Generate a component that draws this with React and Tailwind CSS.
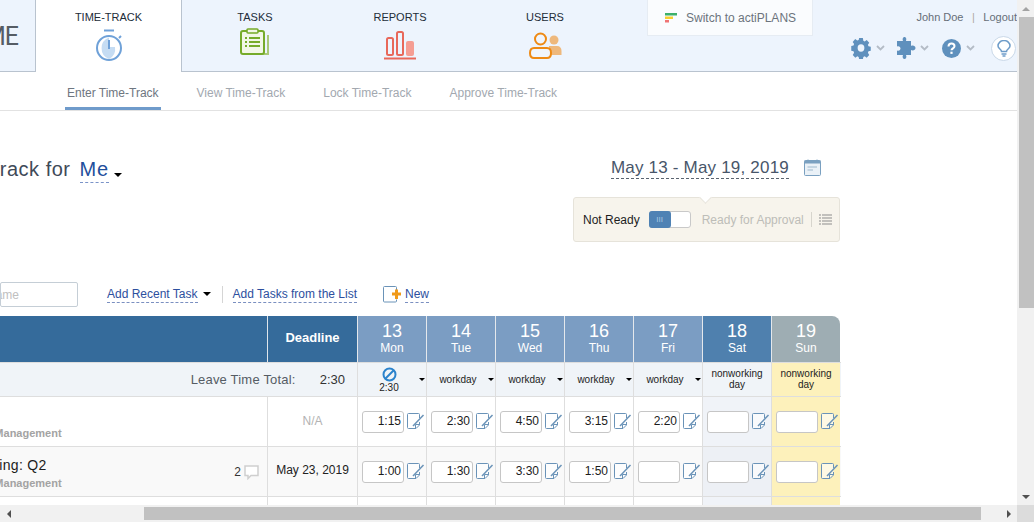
import React from 'react';

const days = [
  { n: '13', d: 'Mon', bg: 'bg-[#7b9dc3]' },
  { n: '14', d: 'Tue', bg: 'bg-[#7b9dc3]' },
  { n: '15', d: 'Wed', bg: 'bg-[#7b9dc3]' },
  { n: '16', d: 'Thu', bg: 'bg-[#7b9dc3]' },
  { n: '17', d: 'Fri', bg: 'bg-[#7b9dc3]' },
  { n: '18', d: 'Sat', bg: 'bg-[#4f80ae]' },
  { n: '19', d: 'Sun', bg: 'bg-[#9eadb3] rounded-tr-[8px]' },
];

const row1 = ['1:15', '2:30', '4:50', '3:15', '2:20', '', ''];
const row2 = ['1:00', '1:30', '3:30', '1:50', '', '', ''];

const Caret = ({ className = '' }) => (
  <span className={`inline-block w-0 h-0 border-x-[4px] border-x-transparent border-t-[4px] border-t-black ${className}`} />
);

const NoteIcon = () => (
  <svg width="18" height="17" viewBox="0 0 18 17" fill="none" className="shrink-0">
    <path d="M1.500 0.500H11.500L12.500 1.500V12L9 15.500H1.500L0.500 14.500V1.500Z" fill="#fff" fillOpacity="0.6" />
    <path d="M12.500 5V1.500A1 1 0 0 0 11.500 0.500H1.500A1 1 0 0 0 0.500 1.500V14.500A1 1 0 0 0 1.500 15.500H9L12.500 12V9" stroke="#6a93b8" strokeWidth="1" />
    <path d="M8.500 15.500V11.500H12.500" stroke="#6a93b8" strokeWidth="1" />
    <path d="M6 13L16.500 2" stroke="#6a93b8" strokeWidth="1.500" />
  </svg>
);

const Chevron = ({ className = '' }) => (
  <svg width="9" height="6" viewBox="0 0 9 6" fill="none" className={className}>
    <path d="M1 1L4.500 4.500L8 1" stroke="#b4bcc6" strokeWidth="1.800" />
  </svg>
);

const TimerIcon = () => (
  <svg width="28" height="34" viewBox="0 0 28 34" fill="none">
    <path d="M9 2.500H19" stroke="#6fa1d8" strokeWidth="2" />
    <path d="M14 9.500A11.500 11.500 0 0 0 14 31A11.500 11.500 0 0 0 20 19H14Z" fill="#c5dcf3" />
    <circle cx="14" cy="20" r="12" stroke="#6fa1d8" strokeWidth="2" />
    <path d="M14 12V21" stroke="#6fa1d8" strokeWidth="2" />
    <path d="M24 10L26 8" stroke="#6fa1d8" strokeWidth="2" />
  </svg>
);

const TasksIcon = () => (
  <svg width="31" height="31" viewBox="0 0 31 31" fill="none">
    <path d="M6 27H29V7H27V25H6Z" fill="#a9c877" />
    <rect x="1" y="3" width="23" height="23" rx="2" fill="#f2f7e7" stroke="#76ab2a" strokeWidth="2" />
    <rect x="7" y="1" width="11" height="4" rx="1" fill="#f2f7e7" stroke="#76ab2a" strokeWidth="1.600" />
    <path d="M5 10H7M9 10H20M5 14H7M9 14H20M5 18H7M9 18H20" stroke="#76ab2a" strokeWidth="2" />
  </svg>
);

const ReportsIcon = () => (
  <svg width="32" height="30" viewBox="0 0 32 30" fill="none">
    <rect x="3" y="7" width="6" height="17" rx="1.500" stroke="#e8685a" strokeWidth="2" />
    <rect x="13" y="1" width="6" height="23" rx="1.500" stroke="#e8685a" strokeWidth="2" />
    <rect x="22" y="10" width="8" height="15" rx="2" fill="#f59d93" />
    <path d="M0 27.500H32" stroke="#e8685a" strokeWidth="2" />
  </svg>
);

const UsersIcon = () => (
  <svg width="33" height="27" viewBox="0 0 33 27" fill="none">
    <circle cx="25" cy="8" r="4.500" fill="#eeb87c" />
    <path d="M20 14H28C31 14 32.500 16 32.500 19V23H20Z" fill="#eeb87c" />
    <circle cx="11.500" cy="7" r="5.500" fill="#f0f5fc" stroke="#ee8a14" strokeWidth="2" />
    <path d="M5 16H18C21 16 22 18 22 21C22 24 21 26 18 26H5C2 26 1 24 1 21C1 18 2 16 5 16Z" fill="#f0f5fc" stroke="#ee8a14" strokeWidth="2" />
  </svg>
);

const GearIcon = () => (
  <svg width="20" height="22" viewBox="0 0 24 24" preserveAspectRatio="none">
    <path
      fillRule="evenodd"
      fill="#5f90bd"
      d="M9.500 0h5l.6 3.200 1.800.8 2.700-1.800 3.400 3.400-1.800 2.600.8 1.800 3 .6v4.800l-3 .6-.8 1.800 1.800 2.600-3.400 3.400-2.700-1.800-1.800.8-.6 3.200h-5l-.6-3.200-1.800-.8-2.700 1.800-3.400-3.400 1.800-2.600-.8-1.800-3-.6V9.600l3-.6.8-1.800L.9 4.600l3.400-3.400L7 3l1.900-.8zM12 7.500a4.500 4.500 0 1 0 0 9 4.500 4.500 0 0 0 0-9z"
      transform="translate(1.200 1.200) scale(.9)"
    />
  </svg>
);

const PuzzleIcon = () => (
  <svg width="20" height="22" viewBox="0 0 20 22">
    <path
      fill="#5f90bd"
      d="M1 4H7C6 1 7.500 0 8.500 0S11 1 10 4H15V9C17 8 19.500 9 19.500 11S17 14 15 13V18H10C11 20 10 22 8.500 22S6 20 7 18H1V13.500C3 14.500 4.500 13 4.500 11.500S3 8.500 1 9.500Z"
    />
  </svg>
);

const BulbIcon = () => (
  <svg width="14" height="17" viewBox="0 0 14 17" fill="none">
    <path d="M4.500 11.500C4.500 9.500 1 8.500 1 6A6 5.500 0 0 1 13 6C13 8.500 9.500 9.500 9.500 11.500Z" stroke="#6d9cc9" strokeWidth="1.500" />
    <path d="M4.500 14H9.500M5.500 16H8.500" stroke="#6d9cc9" strokeWidth="1.500" />
  </svg>
);

const NavTab = ({ label, icon, w, gap = 'mt-[5px]' }) => (
  <div className={`${w} flex flex-col items-center pt-[11px] text-[11px] leading-[13px] text-[#222c38]`}>
    <span>{label}</span>
    <div className={gap}>{icon}</div>
  </div>
);

const SubTab = ({ label, active, className = '' }) => (
  <div className={`h-full px-[2px] pt-[14px] text-[12px] leading-[15px] ${active ? 'text-[#6e7680] border-b-[3px] border-[#6f9bcb]' : 'text-[#a2a8af]'} ${className}`}>
    {label}
  </div>
);

const TimeInput = ({ value }) => (
  <div className="w-[42px] h-[22px] bg-white border border-[#c6c6c6] rounded-[3px] text-right pr-[2px] text-[12px] leading-[19px] text-[#1c1c1c]">
    {value}
  </div>
);

const dayCell = (i, alt) => {
  if (i === 5) return alt ? 'bg-[#edf0f5]' : 'bg-[#f0f3f8]';
  if (i === 6) return 'bg-[#fdf1bb]';
  return alt ? 'bg-[#f9f9f9]' : 'bg-white';
};

const DayCells = ({ values, alt }) =>
  values.map((v, i) => (
    <div key={i} className={`w-[69px] shrink-0 border-l border-[#dedede] flex items-center pl-[4px] gap-[3px] ${dayCell(i, alt)}`}>
      <TimeInput value={v} />
      <NoteIcon />
    </div>
  ));

export default function App() {
  return (
    <div className="w-[1034px] h-[522px] overflow-hidden flex flex-col bg-white font-['Liberation_Sans',Arial,sans-serif]">
      <div className="flex h-[505px]">
        <div className="w-[1017px] h-[505px] overflow-hidden">
          {/* top bar */}
          <div className="h-[72px] flex bg-[#edf4fd] border-b border-[#b9c3cf] relative">
            <div className="w-[36px] h-[71px] border-r border-[#b9c3cf] overflow-hidden flex justify-end items-center pr-[17px]">
              <span className="text-[25px] leading-none tracking-[-1px] text-[#555c64] font-['Roboto',sans-serif] pt-[2px] shrink-0">ME</span>
            </div>
            <div className="w-[146px] h-[72px] bg-white border-r border-[#b9c3cf] flex flex-col items-center pt-[11px] text-[11px] leading-[13px] text-[#222c38] shrink-0">
              <span>TIME-TRACK</span>
              <div className="mt-[4px]"><TimerIcon /></div>
            </div>
            <div className="flex">
              <NavTab label="TASKS" w="w-[146px]" gap="mt-[4px]" icon={<TasksIcon />} />
              <NavTab label="REPORTS" w="w-[144px]" gap="mt-[7px]" icon={<ReportsIcon />} />
              <NavTab label="USERS" w="w-[146px]" gap="mt-[8px]" icon={<UsersIcon />} />
            </div>
            <div className="absolute left-[647px] top-0 w-[166px] h-[36px] bg-[#fafcfe] border-r border-b border-l border-[#e6ecf3] flex items-center pl-[17px] gap-[8px]">
              <svg width="13" height="10" viewBox="0 0 13 10">
                <rect x="0" y="0" width="12" height="2.500" fill="#3db06b" />
                <rect x="0" y="3.500" width="8" height="2.500" fill="#f7cf2e" />
                <rect x="0" y="7" width="4" height="2.500" fill="#ef7474" />
              </svg>
              <span className="text-[12px] text-[#6c747d]">Switch to actiPLANS</span>
            </div>
            <div className="absolute right-0 top-0 w-[190px] h-[71px]">
              <div className="flex justify-end items-center h-[14px] mt-[10px] text-[11px] text-[#666e78]">
                <span>John Doe</span>
                <span className="mx-[8.500px] text-[#b0a9a0]">|</span>
                <span>Logout</span>
              </div>
              <div className="flex items-center mt-[10px] pl-[24px] overflow-hidden h-[28px]">
                <GearIcon />
                <Chevron className="ml-[5px]" />
                <div className="ml-[11px]"><PuzzleIcon /></div>
                <Chevron className="ml-[4px]" />
                <svg width="19" height="19" viewBox="0 0 19 19" className="ml-[13px]">
                  <circle cx="9.500" cy="9.500" r="9.500" fill="#5f90bd" />
                  <path d="M6.500 7.500C6.500 5.800 7.800 4.500 9.500 4.500S12.500 5.600 12.500 7.200C12.500 9.300 9.500 9.300 9.500 11.300" stroke="#fff" strokeWidth="2" fill="none" />
                  <rect x="8.400" y="12.700" width="2.200" height="2.200" fill="#fff" />
                </svg>
                <Chevron className="ml-[5px]" />
                <div className="ml-[16px] w-[25px] h-[25px] shrink-0 rounded-full border border-[#c9d8e8] bg-white flex items-center justify-center">
                  <BulbIcon />
                </div>
              </div>
            </div>
          </div>

          {/* sub tabs */}
          <div className="h-[39px] flex border-b border-[#e2e2e2] pl-[65px]">
            <SubTab label="Enter Time-Track" active />
            <SubTab label="View Time-Track" className="ml-[34px]" />
            <SubTab label="Lock Time-Track" className="ml-[34px]" />
            <SubTab label="Approve Time-Track" className="ml-[34px]" />
          </div>

          {/* title + date */}
          <div className="w-[840px] flex justify-between h-[171px]">
            <div className="flex items-start pt-[46px] ml-[-65px] shrink-0">
              <span className="text-[20px] leading-[24px] tracking-[0.5px] text-[#3f4a58]">Time-Track for</span>
              <span className="ml-[9px] text-[20px] leading-[24px] text-[#1f4f9c] border-b border-dashed border-[#7a93c8] h-[26px] tracking-[0.8px]">Me</span>
              <Caret className="ml-[5px] mt-[16px]" />
            </div>
            <div className="flex flex-col items-end pt-[46px]">
              <div className="flex items-start pr-[19px]">
                <span className="text-[17px] leading-[21px] tracking-[0.2px] text-[#48566a] border-b border-dashed border-[#5a6470] h-[22px]">May 13 - May 19, 2019</span>
                <svg width="17" height="17" viewBox="0 0 17 17" fill="none" className="ml-[15px] mt-[2px]">
                  <rect x="0.500" y="1.500" width="16" height="15" rx="1" fill="#eaf1f7" stroke="#7aa0c0" />
                  <rect x="0.500" y="1.500" width="16" height="3" fill="#7aa0c0" />
                  <path d="M4 0.500V3M13 0.500V3" stroke="#7aa0c0" />
                  <path d="M3.500 8H13M3.500 11H9" stroke="#b8cbdc" strokeWidth="1.500" />
                </svg>
              </div>
              <div className="relative w-[267px] h-[45px] mt-[18px] bg-[#f7f4ec] border border-[#e6e3da] rounded-[3px] flex items-center pl-[9px]">
                <div className="absolute left-[127px] top-[-5px] w-[9px] h-[9px] rotate-45 bg-white border-r border-b border-[#e6e3da]" />
                <span className="text-[12px] text-[#1d1d1d]">Not Ready</span>
                <div className="ml-[9px] w-[42px] h-[17px] rounded-[3px] bg-white border border-[#c9c9c9] flex">
                  <div className="w-[22px] h-[17px] mt-[-1px] ml-[-1px] rounded-[3px] bg-[#4f82b4] flex items-center justify-center text-[#a9c7e2] text-[8px] leading-none">III</div>
                </div>
                <span className="ml-[11px] text-[12px] text-[#bdbdb8]">Ready for Approval</span>
                <div className="ml-[7px] w-px h-[15px] bg-[#d7d5cd]" />
                <svg width="13" height="11" viewBox="0 0 13 11" className="ml-[7px]">
                  <path d="M0 1H2M3 1H13M0 4H2M3 4H13M0 7H2M3 7H13M0 10H2M3 10H13" stroke="#8d8d8d" strokeWidth="1" />
                </svg>
              </div>
            </div>
          </div>

          {/* toolbar */}
          <div className="h-[34px] flex items-start">
            <div className="w-[78px] h-[25px] border border-[#c5ced6] rounded-[2px] flex justify-end items-center pr-[58px] text-[12px] text-[#c0c0c0] overflow-hidden shrink-0">
              <span className="shrink-0">Name</span>
            </div>
            <div className="ml-[29px] mt-[5px] text-[12px] leading-[15px] text-[#2d4f9e] border-b border-dashed border-[#7a8fc0] h-[16px]">Add Recent Task</div>
            <Caret className="ml-[5px] mt-[10px]" />
            <div className="ml-[11px] mt-[4px] w-px h-[17px] bg-[#d5d5d5]" />
            <div className="ml-[10px] mt-[5px] text-[12px] leading-[15px] text-[#2d4f9e] border-b border-dashed border-[#7a8fc0] h-[16px]">Add Tasks from the List</div>
            <svg width="18" height="17" viewBox="0 0 18 17" fill="none" className="ml-[26px] mt-[4px]">
              <path d="M13.500 4V1.500A1 1 0 0 0 12.500 0.500H1.500A1 1 0 0 0 0.500 1.500V15A1 1 0 0 0 1.500 16H12.500A1 1 0 0 0 13.500 15V13.500" stroke="#6a93b8" />
              <path d="M9 6.500H12V3.500H15V6.500H18V9.500H15V13H12V9.500H9Z" fill="#f09a1a" />
            </svg>
            <div className="ml-[4px] mt-[5px] text-[12px] leading-[15px] text-[#2d4f9e] border-b border-dashed border-[#7a8fc0] h-[16px]">New</div>
          </div>

          {/* grid */}
          <div className="w-[841px]">
            <div className="flex h-[46px] text-white">
              <div className="w-[267px] shrink-0 bg-[#356b9b]" />
              <div className="w-[90px] shrink-0 bg-[#356b9b] border-l border-[#dfe6ec] flex items-center justify-center text-[13px] font-bold pb-[2px]">Deadline</div>
              {days.map((d) => (
                <div key={d.n} className={`w-[69px] shrink-0 border-l border-[#e4e8ec] flex flex-col items-center pt-[6px] ${d.bg}`}>
                  <span className="text-[18px] leading-[19px]">{d.n}</span>
                  <span className="text-[12px] leading-[13px] pt-[1px]">{d.d}</span>
                </div>
              ))}
            </div>
            <div className="flex h-[35px] border-y border-[#dedede] bg-[#f0f4f8] text-[10px] text-[#222]">
              <div className="w-[357px] shrink-0 flex items-center justify-end pr-[12px] text-[13px] text-[#555c64]">
                <span className="tracking-[0.2px]">Leave Time Total:</span>
                <span className="ml-[24px] text-[#333]">2:30</span>
              </div>
              {['', 'workday', 'workday', 'workday', 'workday'].map((t, i) => (
                <div key={i} className="relative w-[69px] shrink-0 border-l border-[#dedede] flex items-center justify-center pr-[6px]">
                  {i === 0 ? (
                    <div className="flex flex-col items-center">
                      <svg width="15" height="15" viewBox="0 0 15 15" fill="none">
                        <circle cx="7.500" cy="7.500" r="6" stroke="#2b83cc" strokeWidth="2" />
                        <path d="M3.500 11.500L11.500 3.500" stroke="#2b83cc" strokeWidth="2" />
                      </svg>
                      <span className="leading-[11px]">2:30</span>
                    </div>
                  ) : (
                    <span>{t}</span>
                  )}
                  <Caret className="absolute right-[1px] top-[15px] border-x-[3px]! border-t-[3px]!" />
                </div>
              ))}
              <div className="w-[69px] shrink-0 border-l border-[#dedede] flex items-center justify-center text-center leading-[11px] pb-[2px]">nonworking<br />day</div>
              <div className="w-[69px] shrink-0 border-l border-[#dedede] bg-[#fdf1bb] flex items-center justify-center text-center leading-[11px] pb-[2px]">nonworking<br />day</div>
            </div>

            <div className="flex h-[50px] border-b border-[#dedede]">
              <div className="w-[267px] shrink-0 relative overflow-hidden">
                <span className="absolute left-[-46px] top-[28px] text-[11px] font-bold text-[#a3a3a3] whitespace-nowrap">Project Management</span>
              </div>
              <div className="w-[90px] shrink-0 border-l border-[#dedede] flex items-center justify-center text-[12px] text-[#b3b3b3] pb-[1px]">N/A</div>
              <DayCells values={row1} />
            </div>

            <div className="flex h-[50px] border-b border-[#dedede] bg-[#f9f9f9]">
              <div className="w-[267px] shrink-0 relative overflow-hidden">
                <span className="absolute left-[-38px] top-[10px] text-[14px] leading-[16px] tracking-[0.3px] text-[#1c1c1c] whitespace-nowrap">Planning: Q2</span>
                <span className="absolute left-[-46px] top-[28px] text-[11px] font-bold text-[#a3a3a3] whitespace-nowrap">Project Management</span>
                <div className="absolute right-[8px] top-[16px] flex items-center gap-[3px] text-[12px] text-[#333]">
                  <span>2</span>
                  <svg width="15" height="15" viewBox="0 0 15 15" fill="none">
                    <path d="M1 1H14V10.500H7L4 13.500V10.500H1Z" stroke="#cfcfcf" strokeWidth="1.500" fill="#fff" />
                  </svg>
                </div>
              </div>
              <div className="w-[90px] shrink-0 border-l border-[#dedede] flex items-center justify-center text-[12px] text-[#222] pb-[3px]">May 23, 2019</div>
              <DayCells values={row2} alt />
            </div>

            <div className="flex h-[20px]">
              <div className="w-[267px] shrink-0" />
              <div className="w-[90px] shrink-0 border-l border-[#dedede]" />
              {row2.map((_, i) => (
                <div key={i} className={`w-[69px] shrink-0 border-l border-[#dedede] ${dayCell(i, false)}`} />
              ))}
            </div>
          </div>
        </div>

        {/* vertical scrollbar */}
        <div className="w-[17px] h-[505px] bg-[#f1f1f1] flex flex-col items-center">
          <div className="h-[17px] flex items-center justify-center">
            <span className="w-0 h-0 border-x-[4px] border-x-transparent border-b-[4px] border-b-[#a3a3a3]" />
          </div>
          <div className="w-[15px] ml-[2px] h-[291px] bg-[#c1c1c1]" />
          <div className="flex-1" />
          <div className="h-[17px] flex items-center justify-center">
            <span className="w-0 h-0 border-x-[4px] border-x-transparent border-t-[4px] border-t-[#505050]" />
          </div>
        </div>
      </div>

      {/* horizontal scrollbar */}
      <div className="h-[17px] flex bg-[#f1f1f1] shrink-0">
        <div className="w-[17px] flex items-center justify-center">
          <span className="w-0 h-0 border-y-[4px] border-y-transparent border-r-[4px] border-r-[#505050]" />
        </div>
        <div className="ml-[127px] mt-[2px] w-[837px] h-[13px] bg-[#c1c1c1]" />
        <div className="flex-1" />
        <div className="w-[17px] flex items-center justify-center">
          <span className="w-0 h-0 border-y-[4px] border-y-transparent border-l-[4px] border-l-[#505050]" />
        </div>
        <div className="w-[17px] bg-[#dcdcdc]" />
      </div>
    </div>
  );
}
